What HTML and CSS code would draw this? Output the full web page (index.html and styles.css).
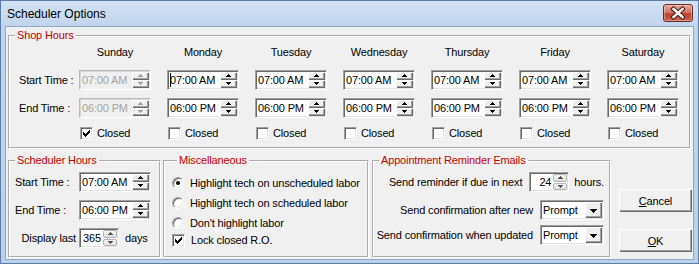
FILE: index.html
```html
<!DOCTYPE html>
<html lang="en">
<head>
  <meta charset="UTF-8">
  <title>Scheduler Options</title>
  <link rel="stylesheet" href="styles.css">
</head>
<body>
  <svg class="defs" width="0" height="0">
    <defs>
      <path id="up" d="M2 0h1v1h1v1h1v1H0V2h1V1h1z"/>
      <path id="dn" d="M0 0h5v1H4v1H3v1H2V2H1V1H0z"/>
      <path id="drop" d="M0 0h7v1H6v1H5v1H4v1H3V3H2V2H1V1H0z"/>
      <path id="tick" d="M0 2h1v3H0zM1 3h1v3H1zM2 4h1v3H2zM3 3h1v3H3zM4 2h1v3H4zM5 1h1v3H5zM6 0h1v3H6z"/>
    </defs>
  </svg>
  <div class="window">
    <div class="titlebar">
      <span class="title">Scheduler Options</span>
      <button class="close-btn">
        <svg width="30" height="18" viewBox="0 0 30 18">
          <path d="M10.5 5 L19.5 13 M19.5 5 L10.5 13" stroke="#4a1d18" stroke-width="4.6" stroke-linecap="square"/>
          <path d="M10.5 5 L19.5 13 M19.5 5 L10.5 13" stroke="#fff" stroke-width="2.4" stroke-linecap="square"/>
        </svg>
      </button>
    </div>
    <div class="client">
      <!-- Shop Hours -->
      <fieldset class="group shop">
        <legend>Shop Hours</legend>
        <div class="week">
          <span></span>
          <span class="day">Sunday</span>
          <span class="day">Monday</span>
          <span class="day">Tuesday</span>
          <span class="day">Wednesday</span>
          <span class="day">Thursday</span>
          <span class="day">Friday</span>
          <span class="day">Saturday</span>

          <span class="row-label">Start Time :</span>
          <div class="dtp disabled"><span class="dtp-text">07:00 AM</span><span class="spin"><span class="spin-btn"><svg width="5" height="3"><use href="#up"/></svg></span><span class="spin-btn"><svg width="5" height="3"><use href="#dn"/></svg></span></span></div>
          <div class="dtp"><span class="dtp-text"><i class="caret"></i>07:00 AM</span><span class="spin"><span class="spin-btn"><svg width="5" height="3"><use href="#up"/></svg></span><span class="spin-btn"><svg width="5" height="3"><use href="#dn"/></svg></span></span></div>
          <div class="dtp"><span class="dtp-text">07:00 AM</span><span class="spin"><span class="spin-btn"><svg width="5" height="3"><use href="#up"/></svg></span><span class="spin-btn"><svg width="5" height="3"><use href="#dn"/></svg></span></span></div>
          <div class="dtp"><span class="dtp-text">07:00 AM</span><span class="spin"><span class="spin-btn"><svg width="5" height="3"><use href="#up"/></svg></span><span class="spin-btn"><svg width="5" height="3"><use href="#dn"/></svg></span></span></div>
          <div class="dtp"><span class="dtp-text">07:00 AM</span><span class="spin"><span class="spin-btn"><svg width="5" height="3"><use href="#up"/></svg></span><span class="spin-btn"><svg width="5" height="3"><use href="#dn"/></svg></span></span></div>
          <div class="dtp"><span class="dtp-text">07:00 AM</span><span class="spin"><span class="spin-btn"><svg width="5" height="3"><use href="#up"/></svg></span><span class="spin-btn"><svg width="5" height="3"><use href="#dn"/></svg></span></span></div>
          <div class="dtp"><span class="dtp-text">07:00 AM</span><span class="spin"><span class="spin-btn"><svg width="5" height="3"><use href="#up"/></svg></span><span class="spin-btn"><svg width="5" height="3"><use href="#dn"/></svg></span></span></div>

          <span class="row-label">End Time :</span>
          <div class="dtp disabled"><span class="dtp-text">06:00 PM</span><span class="spin"><span class="spin-btn"><svg width="5" height="3"><use href="#up"/></svg></span><span class="spin-btn"><svg width="5" height="3"><use href="#dn"/></svg></span></span></div>
          <div class="dtp"><span class="dtp-text">06:00 PM</span><span class="spin"><span class="spin-btn"><svg width="5" height="3"><use href="#up"/></svg></span><span class="spin-btn"><svg width="5" height="3"><use href="#dn"/></svg></span></span></div>
          <div class="dtp"><span class="dtp-text">06:00 PM</span><span class="spin"><span class="spin-btn"><svg width="5" height="3"><use href="#up"/></svg></span><span class="spin-btn"><svg width="5" height="3"><use href="#dn"/></svg></span></span></div>
          <div class="dtp"><span class="dtp-text">06:00 PM</span><span class="spin"><span class="spin-btn"><svg width="5" height="3"><use href="#up"/></svg></span><span class="spin-btn"><svg width="5" height="3"><use href="#dn"/></svg></span></span></div>
          <div class="dtp"><span class="dtp-text">06:00 PM</span><span class="spin"><span class="spin-btn"><svg width="5" height="3"><use href="#up"/></svg></span><span class="spin-btn"><svg width="5" height="3"><use href="#dn"/></svg></span></span></div>
          <div class="dtp"><span class="dtp-text">06:00 PM</span><span class="spin"><span class="spin-btn"><svg width="5" height="3"><use href="#up"/></svg></span><span class="spin-btn"><svg width="5" height="3"><use href="#dn"/></svg></span></span></div>
          <div class="dtp"><span class="dtp-text">06:00 PM</span><span class="spin"><span class="spin-btn"><svg width="5" height="3"><use href="#up"/></svg></span><span class="spin-btn"><svg width="5" height="3"><use href="#dn"/></svg></span></span></div>

          <span></span>
          <label class="check"><span class="box"><svg width="7" height="7"><use href="#tick"/></svg></span>Closed</label>
          <label class="check"><span class="box"></span>Closed</label>
          <label class="check"><span class="box"></span>Closed</label>
          <label class="check"><span class="box"></span>Closed</label>
          <label class="check"><span class="box"></span>Closed</label>
          <label class="check"><span class="box"></span>Closed</label>
          <label class="check"><span class="box"></span>Closed</label>
        </div>
      </fieldset>

      <div class="bottom">
        <!-- Scheduler Hours -->
        <fieldset class="group sched">
          <legend>Scheduler Hours</legend>
          <div class="sched-grid">
            <span class="row-label">Start Time :</span>
            <div class="dtp"><span class="dtp-text">07:00 AM</span><span class="spin"><span class="spin-btn"><svg width="5" height="3"><use href="#up"/></svg></span><span class="spin-btn"><svg width="5" height="3"><use href="#dn"/></svg></span></span></div>
            <span class="row-label">End Time :</span>
            <div class="dtp"><span class="dtp-text">06:00 PM</span><span class="spin"><span class="spin-btn"><svg width="5" height="3"><use href="#up"/></svg></span><span class="spin-btn"><svg width="5" height="3"><use href="#dn"/></svg></span></span></div>
            <span class="row-label right">Display last</span>
            <div class="inline">
              <div class="num"><span class="num-text">365</span><span class="ud"><span class="ud-btn"><svg width="5" height="3"><use href="#up"/></svg></span><span class="ud-btn"><svg width="5" height="3"><use href="#dn"/></svg></span></span></div>
              <span>days</span>
            </div>
          </div>
        </fieldset>

        <!-- Miscellaneous -->
        <fieldset class="group misc">
          <legend>Miscellaneous</legend>
          <label class="option"><span class="radio on"></span>Highlight tech on unscheduled labor</label>
          <label class="option"><span class="radio"></span>Highlight tech on scheduled labor</label>
          <label class="option"><span class="radio"></span>Don't highlight labor</label>
          <label class="option short"><span class="box"><svg width="7" height="7"><use href="#tick"/></svg></span>Lock closed R.O.</label>
        </fieldset>

        <!-- Appointment Reminder Emails -->
        <fieldset class="group reminders">
          <legend>Appointment Reminder Emails</legend>
          <div class="rem-row">
            <span>Send reminder if due in next</span>
            <div class="num"><span class="num-text">24</span><span class="ud"><span class="ud-btn"><svg width="5" height="3"><use href="#up"/></svg></span><span class="ud-btn"><svg width="5" height="3"><use href="#dn"/></svg></span></span></div>
            <span class="unit">hours.</span>
          </div>
          <div class="rem-row">
            <span>Send confirmation after new</span>
            <div class="combo"><span class="combo-text">Prompt</span><span class="drop-btn"><svg width="7" height="4"><use href="#drop"/></svg></span></div>
          </div>
          <div class="rem-row last">
            <span>Send confirmation when updated</span>
            <div class="combo"><span class="combo-text">Prompt</span><span class="drop-btn"><svg width="7" height="4"><use href="#drop"/></svg></span></div>
          </div>
        </fieldset>

        <div class="actions">
          <button class="btn"><u>C</u>ancel</button>
          <button class="btn"><u>O</u>K</button>
        </div>
      </div>
    </div>
  </div>
</body>
</html>
```

FILE: styles.css
```css
* {
  box-sizing: border-box;
}
body {
  margin: 0;
  font-family: "Liberation Sans", Arial, sans-serif;
  font-size: 11px;
  letter-spacing: -0.15px;
  color: #000;
  background: #b9d1ea;
}
.defs {
  display: block;
  width: 0;
  height: 0;
}
.window {
  width: 699px;
  height: 264px;
  border: 1px solid #5b7da6;
  background: linear-gradient(#d4e3f4, #bfd4ec 26px, #b9d1ea);
  display: flex;
  flex-direction: column;
}
.titlebar {
  height: 25px;
  flex: none;
  display: flex;
  justify-content: space-between;
  align-items: flex-start;
  padding: 0 5px 0 6px;
}
.title {
  font-size: 12px;
  letter-spacing: 0;
  line-height: 26px;
}
.close-btn {
  margin-top: 3px;
  width: 30px;
  height: 18px;
  padding: 0;
  border: 1px solid #6b2a22;
  border-radius: 3px;
  background: linear-gradient(#e8a596, #d37865 45%, #c0432e 55%, #c9604a);
  box-shadow: inset 0 0 0 1px rgba(255, 255, 255, 0.35);
}
.close-btn svg {
  display: block;
  margin: -1px;
}
.client {
  flex: 1;
  margin: 0 4px 3px;
  border: 1px solid #8ea8c7;
  background: #f0f0f0;
}

/* group boxes */
.group {
  margin: 0;
  padding: 0;
  min-width: 0;
  border: 2px groove #fff;
}
.group legend {
  color: #c80000;
  padding: 0 2px;
  margin-left: 5px;
  line-height: 13px;
}
.shop {
  width: 683px;
  margin: 2px 0 0 2px;
  padding-bottom: 7px;
}
.week {
  display: grid;
  grid-template-columns: 69px repeat(6, 88px) 72px;
  grid-template-rows: 20px 20px 20px 14px;
  row-gap: 8px;
  align-items: center;
}
.day {
  width: 72px;
  text-align: center;
}
.row-label {
  padding-left: 9px;
}

/* date-time pickers */
.dtp {
  width: 72px;
  height: 20px;
  display: flex;
  align-items: center;
  background: #fff;
  border: 1px solid;
  border-color: #a0a0a0 #fff #fff #a0a0a0;
  box-shadow: inset 1px 1px #696969, inset -1px -1px #e3e3e3;
  padding: 1px 1px 1px 2px;
}
.dtp-text {
  flex: 1;
  position: relative;
}
.caret {
  position: absolute;
  left: 0;
  top: -1px;
  width: 1px;
  height: 14px;
  background: #000;
}
.spin {
  width: 17px;
  align-self: stretch;
  display: flex;
  flex-direction: column;
}
.spin-btn {
  flex: 1;
  display: flex;
  align-items: center;
  justify-content: center;
  background: #f0f0f0;
  box-shadow: inset 1px 1px #fff, inset -1px -1px #696969, inset -2px -2px #a0a0a0;
  color: #000;
}
.spin-btn svg {
  display: block;
  fill: currentColor;
  margin: 0 1px 1px 0;
}
.dtp.disabled {
  background: #f0f0f0;
  border-color: #b9b9b9 #fff #fff #b9b9b9;
  box-shadow: inset 1px 1px #d6d6d6, inset -1px -1px #f0f0f0;
  color: #a3a3a3;
}
.dtp.disabled .spin-btn {
  color: #a0a0a0;
}

/* checkboxes and radios */
.check {
  display: flex;
  align-items: center;
  gap: 4px;
  padding-left: 1px;
}
.box {
  width: 13px;
  height: 13px;
  flex: none;
  background: #fff;
  border: 1px solid;
  border-color: #a0a0a0 #fff #fff #a0a0a0;
  box-shadow: inset 1px 1px #696969, inset -1px -1px #e3e3e3;
  padding: 2px;
}
.box svg {
  display: block;
  fill: #000;
}
.radio {
  width: 12px;
  height: 12px;
  flex: none;
  border-radius: 50%;
  background: #fff;
  border: 1px solid;
  border-color: #a0a0a0 #fff #fff #a0a0a0;
  box-shadow: inset 1px 1px #696969, inset -1px -1px #e3e3e3;
  display: flex;
  align-items: center;
  justify-content: center;
}
.radio.on::after {
  content: "";
  width: 4px;
  height: 4px;
  border-radius: 50%;
  background: #000;
}

/* bottom row */
.bottom {
  display: flex;
  margin: 5px 0 0 2px;
}
.bottom .group {
  height: 104px;
}
.sched {
  width: 153px;
}
.sched-grid {
  display: grid;
  grid-template-columns: 64px auto;
  grid-template-rows: 20px 20px 20px;
  row-gap: 8px;
  align-items: center;
  padding: 5px 0 0 5px;
}
.sched .row-label {
  padding-left: 0;
}
.sched .row-label.right {
  justify-self: end;
  padding-right: 3px;
}
.inline {
  display: flex;
  align-items: center;
  gap: 6px;
}

/* numeric up-down */
.num {
  width: 40px;
  height: 20px;
  display: flex;
  background: #fff;
  border: 1px solid;
  border-color: #a0a0a0 #fff #fff #a0a0a0;
  box-shadow: inset 1px 1px #696969, inset -1px -1px #e3e3e3;
  padding: 1px 1px 1px 2px;
}
.num-text {
  flex: 1;
  text-align: right;
  padding-right: 2px;
  line-height: 16px;
}
.ud {
  width: 14px;
  display: flex;
  flex-direction: column;
  gap: 1px;
}
.ud-btn {
  flex: 1;
  display: flex;
  align-items: center;
  justify-content: center;
  border: 1px solid #b4b4b4;
  border-radius: 2px;
  background: linear-gradient(#f6f6f6, #dedede);
  color: #555;
}
.ud-btn svg {
  display: block;
  fill: currentColor;
}

.misc {
  width: 206px;
  margin-left: 2px;
  padding: 6px 0 0 7px;
}
.option {
  height: 20px;
  display: flex;
  align-items: center;
  gap: 6px;
}
.option.short {
  height: 14px;
}
.option .box {
  margin-left: 0;
}

.reminders {
  width: 239px;
  margin-left: 3px;
  padding: 5px 5px 0 0;
}
.rem-row {
  height: 20px;
  display: flex;
  justify-content: flex-end;
  align-items: center;
  gap: 7px;
  margin-bottom: 8px;
}
.rem-row.last {
  margin-top: -3px;
}
.rem-row .unit {
  margin-left: -2px;
}

/* combo boxes */
.combo {
  width: 64px;
  height: 20px;
  display: flex;
  align-items: center;
  background: #fff;
  border: 1px solid;
  border-color: #a0a0a0 #fff #fff #a0a0a0;
  box-shadow: inset 1px 1px #696969, inset -1px -1px #e3e3e3;
  padding: 1px 1px 1px 2px;
}
.combo-text {
  flex: 1;
}
.drop-btn {
  width: 17px;
  align-self: stretch;
  display: flex;
  align-items: center;
  justify-content: center;
  background: #f0f0f0;
  box-shadow: inset 1px 1px #fff, inset -1px -1px #696969, inset -2px -2px #a0a0a0;
}
.drop-btn svg {
  display: block;
  fill: #000;
  margin: 1px 1px 0 0;
}

/* dialog buttons */
.actions {
  display: flex;
  flex-direction: column;
  gap: 17px;
  margin: 35px 0 0 8px;
}
.btn {
  width: 73px;
  height: 23px;
  padding: 0;
  border: none;
  font: inherit;
  letter-spacing: inherit;
  color: #000;
  background: #f0f0f0;
  box-shadow: inset 1px 1px #fff, inset -1px -1px #696969, inset -2px -2px #a0a0a0;
}
```
